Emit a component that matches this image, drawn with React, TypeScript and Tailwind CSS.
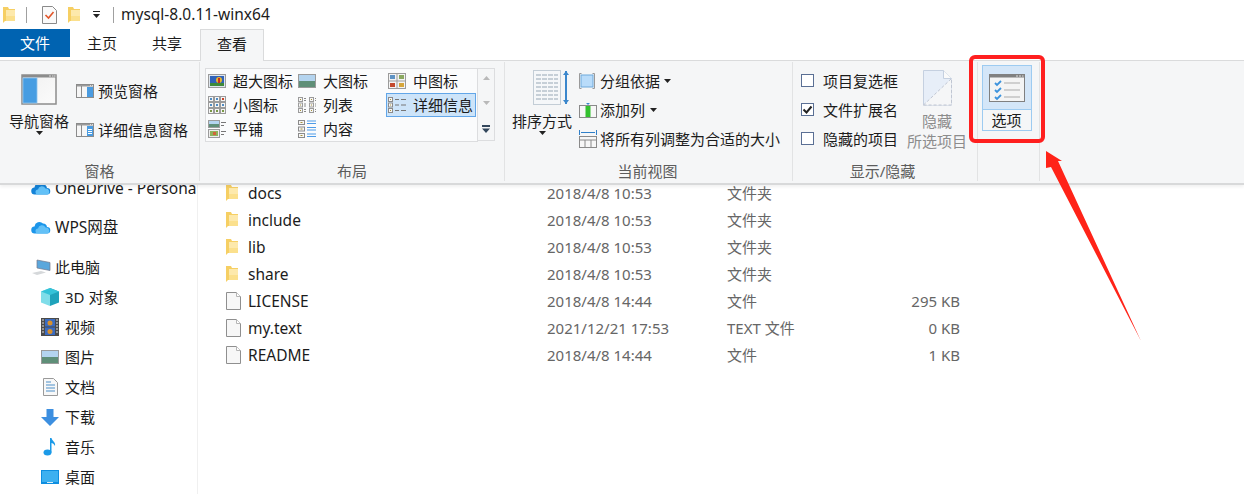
import React from "react";

const Folder = ({ className = "" }: { className?: string }) => (
  <svg className={className} viewBox="0 0 12 16" width="12" height="16">
    <path d="M0 0h5l1 2h6V14H2l-2 2z" fill="#f6cf63" />
    <path d="M3 3h9v11H3z" fill="#fde9ac" />
    <path d="M3 9h9v5H3z" fill="#fbe08d" />
  </svg>
);

const FileIcon = () => (
  <svg viewBox="0 0 15 18" width="15" height="18">
    <path d="M.5.500h10l4 4v13H.5z" fill="#f7f7f7" stroke="#8f8f8f" />
    <path d="M10.500.500v4h4" fill="#fff" stroke="#b5b5b5" />
  </svg>
);

const Caret = ({ className = "" }: { className?: string }) => (
  <svg className={className} viewBox="0 0 7 4" width="7" height="4">
    <path d="M0 0h7L3.500 4z" fill="#222" />
  </svg>
);

const Pane = ({ details }: { details?: boolean }) => (
  <svg viewBox="0 0 18 14" width="18" height="14">
    <rect x=".5" y=".5" width="17" height="13" fill="#f6f6f6" stroke="#8b8b8b" />
    <rect x="1" y="1" width="16" height="1.500" fill="#9a9a9a" />
    <rect x="5" y="2" width="1" height="11" fill="#8b8b8b" />
    <rect x="11" y="3" width="6" height="10" fill="#4a9be0" />
    <rect x="14" y="1" width="1" height="1" fill="#ddd" />
    <rect x="16" y="1" width="1" height="1" fill="#ddd" />
    {details && <path d="M12 6.500h4M12 8.500h4M12 10.500h4" stroke="#fff" strokeWidth="1" />}
  </svg>
);

const Landscape = ({ x = 0, y = 0, w = 18, h = 12 }: { x?: number; y?: number; w?: number; h?: number }) => (
  <g>
    <rect x={x + 0.5} y={y + 0.5} width={w - 1} height={h - 1} fill="#eaf1f8" stroke="#9b9b9b" />
    <rect x={x + 1} y={y + 1} width={w - 2} height={(h - 2) / 2} fill="#b4d4ef" />
    <rect x={x + 1} y={y + h / 2} width={w - 2} height={h / 2 - 1} fill="#5f8f78" />
  </g>
);

const IconXL = () => (
  <svg viewBox="0 0 18 14" width="18" height="14">
    <rect x=".5" y=".5" width="17" height="13" fill="#dfe6ee" stroke="#9b9b9b" />
    <rect x="2" y="2" width="14" height="10" fill="#2f62b8" />
    <circle cx="11" cy="6" r="3" fill="#e8b52b" />
    <rect x="10" y="4" width="2" height="5" fill="#c8321f" />
    <rect x="2" y="9" width="14" height="3" fill="#3d8a3a" />
  </svg>
);

const IconL = () => (
  <svg viewBox="0 0 18 14" width="18" height="14">
    <Landscape w={18} h={14} />
  </svg>
);

const IconM = () => (
  <svg viewBox="0 0 18 16" width="18" height="16">
    <rect x=".5" y=".5" width="17" height="15" fill="#f4f4f4" stroke="#9b9b9b" />
    <path d="M9 0v16M0 8h18" stroke="#9b9b9b" />
    <rect x="2" y="2" width="5" height="4" fill="#5f93c4" />
    <rect x="11" y="2" width="5" height="4" fill="#8aa860" />
    <rect x="2" y="10" width="5" height="4" fill="#c44a2e" />
    <rect x="11" y="10" width="5" height="4" fill="#d6a63c" />
  </svg>
);

const IconS = () => (
  <svg viewBox="0 0 18 18" width="18" height="18">
    {[0, 6, 12].map((y) =>
      [0, 6, 12].map((x) => (
        <g key={`${x}-${y}`}>
          <rect x={x + 0.5} y={y + 0.5} width="5" height="5" fill="#f5f5f5" stroke="#9b9b9b" />
          <rect x={x + 2} y={y + 2} width="2" height="2" fill={x === 12 && y === 0 ? "#c8432a" : y === 12 ? "#7a9a46" : "#4f8cc4"} />
        </g>
      ))
    )}
  </svg>
);

const IconList = () => (
  <svg viewBox="0 0 18 16" width="18" height="16">
    {[0, 5.500, 11].map((y) =>
      [0, 11].map((x) => (
        <g key={`${x}-${y}`}>
          <rect x={x + 0.5} y={y + 0.5} width="4" height="4" fill="#f5f5f5" stroke="#9b9b9b" />
          <path d={`M${x + 6} ${y + 1.500}h2M${x + 6} ${y + 3.500}h2`} stroke="#8a8a8a" />
          <rect x={x + 2} y={y + 2} width="1" height="1" fill="#a6923c" />
        </g>
      ))
    )}
  </svg>
);

const IconDetail = () => (
  <svg viewBox="0 0 18 16" width="18" height="16">
    {[0, 5.500, 11].map((y) => (
      <g key={y}>
        <rect x=".5" y={y + 0.5} width="4" height="4" fill="#f5f5f5" stroke="#8b8b8b" />
        <rect x="2" y={y + 2} width="1" height="1" fill="#a6923c" />
        <path d={`M7 ${y + 2.500}h4M13 ${y + 2.500}h5`} stroke="#777" />
      </g>
    ))}
  </svg>
);

const IconTile = () => (
  <svg viewBox="0 0 18 18" width="18" height="18">
    <Landscape x={0} y={0} w={12} h={8} />
    <path d="M13 2.500h5M13 5.500h3M13 11.500h5M13 14.500h3" stroke="#777" />
    <rect x=".5" y="9.500" width="11" height="8" fill="#eee" stroke="#9b9b9b" />
    <rect x="2" y="11" width="8" height="5" fill="#8eb35c" />
    <rect x="5" y="12" width="3" height="3" fill="#d2653a" />
  </svg>
);

const IconContent = () => (
  <svg viewBox="0 0 18 18" width="18" height="18">
    {[0, 6.500, 13].map((y) => (
      <g key={y}>
        <rect x=".5" y={y + 0.5} width="6" height="4" fill="#f5f5f5" stroke="#8b8b8b" />
        <rect x="2.500" y={y + 2} width="2" height="1" fill="#a6923c" />
        <path d={`M9 ${y + 1}h9M9 ${y + 3.500}h9`} stroke="#4d9be8" />
      </g>
    ))}
  </svg>
);

const Tool = ({ icon, label, caret, gap }: { icon: React.ReactNode; label: string; caret?: boolean; gap?: string }) => (
  <div className="flex h-[29px] items-center whitespace-nowrap">
    <span className="flex w-[21px] justify-start">{icon}</span>
    <span>{label}</span>
    {caret && <Caret className={gap} />}
  </div>
);

const Group = ({ label, className, children, labelClass = "" }: { label: string; className: string; children: React.ReactNode; labelClass?: string }) => (
  <div className={`flex h-[119px] shrink-0 flex-col border-r border-[#e2e3e4] ${className}`}>
    <div className="h-[99px]">{children}</div>
    <div className={`text-center text-[15px] leading-[20px] text-[#5c5c5c] ${labelClass}`}>{label}</div>
  </div>
);

const Gallery = ({ icon, label, selected }: { icon: React.ReactNode; label: string; selected?: boolean }) => (
  <div className={`flex items-center border pl-[1px] ${selected ? "border-[#62a6e8] bg-[#cde4f9]" : "border-transparent"}`}>
    <span className="flex w-[25px] justify-start">{icon}</span>
    <span className="whitespace-nowrap">{label}</span>
  </div>
);

const Check = ({ label, on }: { label: string; on?: boolean }) => (
  <div className="flex h-[29px] items-center">
    <span className="mr-[9px] flex h-[13px] w-[13px] items-center justify-center border border-[#5a6f94] bg-white">
      {on && (
        <svg viewBox="0 0 11 11" width="11" height="11">
          <path d="M1.500 5.500l3 3 5-6" fill="none" stroke="#222" strokeWidth="2" />
        </svg>
      )}
    </span>
    <span>{label}</span>
  </div>
);

const NavRow = ({ icon, label, indent, latin }: { icon: React.ReactNode; label: string; indent?: boolean; latin?: boolean }) => (
  <div className={`flex h-[30px] items-center whitespace-nowrap ${indent ? "pl-[40px]" : "pl-[31px]"}`}>
    <span className={`flex w-[20px] justify-center ${indent ? "mr-[5px]" : "mr-[4px]"}`}>{icon}</span>
    <span className={latin ? "text-[15.5px]" : ""}>{label}</span>
  </div>
);

const Cloud = ({ color = "#1c96ea" }: { color?: string }) => (
  <svg viewBox="0 0 20 14" width="20" height="14">
    <path d="M4 13.500a3.500 3.500 0 0 1-.5-7A5 5 0 0 1 12 3.500a4 4 0 0 1 4 3.500 3.200 3.200 0 0 1 0 6.500z" fill={color} />
    <path d="M7 13.500a2.500 2.500 0 0 1 0-5 4 4 0 0 1 7.500-1 3.200 3.200 0 0 1 2 6z" fill="#63c1f7" />
  </svg>
);

const files = [
  ["docs", "2018/4/8 10:53", "文件夹", ""],
  ["include", "2018/4/8 10:53", "文件夹", ""],
  ["lib", "2018/4/8 10:53", "文件夹", ""],
  ["share", "2018/4/8 10:53", "文件夹", ""],
  ["LICENSE", "2018/4/8 14:44", "文件", "295 KB"],
  ["my.text", "2021/12/21 17:53", "TEXT 文件", "0 KB"],
  ["README", "2018/4/8 14:44", "文件", "1 KB"],
];

export default function App() {
  return (
    <div className="relative h-[494px] w-[1244px] overflow-hidden bg-white text-[15px] leading-[20px] text-[#1c1c1c] [font-family:'Noto_Sans','Noto_Sans_CJK_SC',sans-serif]">
      {/* Title bar */}
      <div className="flex h-[29px] items-center">
        <Folder className="ml-[3px]" />
        <span className="ml-[11px] h-[16px] w-px bg-[#a0a0a0]" />
        <svg className="ml-[15px]" viewBox="0 0 15 18" width="15" height="18">
          <path d="M.5.500h10l4 4v13H.5z" fill="#fafafa" stroke="#8a8a8a" />
          <path d="M3.500 9l3 3 5-6" fill="none" stroke="#e2562a" strokeWidth="1.600" />
        </svg>
        <Folder className="ml-[11px]" />
        <svg className="ml-[13px]" viewBox="0 0 7 7" width="7" height="7">
          <path d="M0 0h7v1H0zM0 3h7L3.500 7z" fill="#222" />
        </svg>
        <span className="ml-[13px] h-[16px] w-px bg-[#a0a0a0]" />
        <span className="ml-[7px] -mt-[2px] text-[15.5px]">mysql-8.0.11-winx64</span>
      </div>

      {/* Tabs */}
      <div className="flex h-[32px] border-b border-[#dadbdc]">
        <div className="flex h-[28px] w-[70px] items-center justify-center bg-[#0063b1] text-white">文件</div>
        <div className="ml-[17px] flex h-[28px] items-center">主页</div>
        <div className="ml-[35px] flex h-[28px] items-center">共享</div>
        <div className="z-10 ml-[18px] flex h-[32px] w-[64px] items-center justify-center border border-b-0 border-[#dadbdc] bg-[#f5f6f7] pb-[4px]">查看</div>
      </div>

      {/* Ribbon */}
      <div className="relative z-10 flex h-[124px] border-b-2 border-[#d8d9da] bg-[#f5f6f7] pt-[1px] shadow-[0_2px_3px_rgba(0,0,0,0.06)]">
        <Group label="窗格" className="w-[200px]">
          <div className="flex h-full">
            <div className="flex w-[78px] flex-col items-center pt-[12px]">
              <svg viewBox="0 0 36 31" width="36" height="31">
                <defs>
                  <linearGradient id="navRight" x1="0" x2="1" y1="0" y2="1">
                    <stop offset="0" stopColor="#f0f0f0" />
                    <stop offset="1" stopColor="#fbfbfb" />
                  </linearGradient>
                </defs>
                <rect x="1" y="1" width="34" height="29" fill="url(#navRight)" stroke="#8c8c8c" strokeWidth="1.500" />
                <rect x="1" y="1" width="34" height="2.500" fill="#8c8c8c" />
                <path d="M28 2h2M31 2h1.500M33 2h1.500" stroke="#ddd" />
                <rect x="2" y="4" width="14" height="25" fill="#479de2" stroke="#8cc2ee" strokeWidth=".8" />
              </svg>
              <span className="mt-[6px]">导航窗格</span>
              <Caret />
            </div>
            <div className="-ml-[2px] pt-[9px]">
              <div className="flex h-[39px] items-center">
                <span className="w-[22px]">
                  <Pane />
                </span>
                预览窗格
              </div>
              <div className="flex h-[39px] items-center">
                <span className="w-[22px]">
                  <Pane details />
                </span>
                详细信息窗格
              </div>
            </div>
          </div>
        </Group>

        <Group label="布局" className="w-[305px]">
          <div className="flex pl-[5px] pt-[6px]">
            <div className="grid h-[74px] w-[273px] grid-cols-[90px_90px_90px] grid-rows-[24px_24px_24px] border border-[#dcdddf] bg-[#fafbfc]">
              <Gallery icon={<IconXL />} label="超大图标" />
              <Gallery icon={<IconL />} label="大图标" />
              <Gallery icon={<IconM />} label="中图标" />
              <Gallery icon={<IconS />} label="小图标" />
              <Gallery icon={<IconList />} label="列表" />
              <Gallery icon={<IconDetail />} label="详细信息" selected />
              <Gallery icon={<IconTile />} label="平铺" />
              <Gallery icon={<IconContent />} label="内容" />
            </div>
            <div className="flex h-[73px] w-[17px] flex-col items-center justify-between border-y border-r border-[#dcdddf] py-[7px]">
              <svg viewBox="0 0 7 4" width="7" height="4">
                <path d="M0 4h7L3.500 0z" fill="#b9b9b9" />
              </svg>
              <svg viewBox="0 0 7 4" width="7" height="4">
                <path d="M0 0h7L3.500 4z" fill="#b9b9b9" />
              </svg>
              <svg viewBox="0 0 8 8" width="8" height="8">
                <path d="M0 0h8v2H0zM0 3.500h8L4 8z" fill="#33475c" />
              </svg>
            </div>
          </div>
        </Group>

        <Group label="当前视图" className="w-[288px]" labelClass="pr-[2px]">
          <div className="flex h-full">
            <div className="flex w-[74px] flex-col items-center pt-[8px]">
              <svg className="ml-[18px]" viewBox="0 0 37 36" width="37" height="36">
                <rect x=".5" y=".5" width="27" height="34" fill="#f5f7f9" stroke="#c3cdd6" />
                <path d="M3 5h22M3 9h22M3 13h22M3 17h22M3 21h22M3 25h22M3 29h22" stroke="#b7c2cc" strokeWidth="1.500" strokeDasharray="5 1" />
                <path d="M33 1v33" stroke="#3b87cc" strokeWidth="2" />
                <path d="M30 5l3-4 3 4zM30 30l3 4 3-4z" fill="#3b87cc" />
              </svg>
              <span className="mt-[5px]">排序方式</span>
              <Caret />
            </div>
            <div className="pt-[4px]">
              <Tool
                caret
                gap="ml-[4px]"
                label="分组依据"
                icon={
                  <svg viewBox="0 0 16 16" width="16" height="16">
                    <rect x="2" y="2" width="12" height="12" fill="#b9dcfa" stroke="#6fa9db" />
                    <path d="M2.500.500h-2v15h2M13.500.500h2v15h-2" fill="none" stroke="#9a9a9a" />
                  </svg>
                }
              />
              <Tool
                caret
                gap="ml-[5px]"
                label="添加列"
                icon={
                  <svg viewBox="0 0 18 17" width="18" height="17">
                    <path d="M9 0v2M7 2h4L9 4z" fill="#3b87cc" stroke="none" />
                    <rect x=".5" y="4.500" width="17" height="12" fill="#f7f7f7" stroke="#8a8a8a" />
                    <rect x="6.500" y="5" width="5" height="11" fill="#33c12f" />
                  </svg>
                }
              />
              <Tool
                label="将所有列调整为合适的大小"
                icon={
                  <svg viewBox="0 0 18 18" width="18" height="18">
                    <path d="M.5 0v5M17.500 0v5M2 2.500h14" stroke="#2f7fc8" />
                    <rect x=".5" y="6.500" width="17" height="11" fill="#f7f7f7" stroke="#8a8a8a" />
                    <path d="M0 10h18M6 10v8M12 10v8" stroke="#8a8a8a" />
                  </svg>
                }
              />
            </div>
          </div>
        </Group>

        <Group label="显示/隐藏" className="w-[185px]" labelClass="pr-[5px]">
          <div className="flex h-full pl-[8px] pt-[4px]">
            <div className="w-[106px] whitespace-nowrap">
              <Check label="项目复选框" />
              <Check label="文件扩展名" on />
              <Check label="隐藏的项目" />
            </div>
            <div className="flex w-[60px] flex-col items-center whitespace-nowrap pt-[4px] text-[#8c8c8c]">
              <svg viewBox="0 0 29 36" width="29" height="36">
                <path d="M.5 35V.5h20l8 8V35z" fill="#e7eef8" stroke="#c5d0e0" />
                <path d="M20.500.500v8h8" fill="#fafafa" stroke="#c5d0e0" />
                <path d="M.5 35L28.500 8.500V35z" fill="#f5f6f7" stroke="#c0c6d2" strokeDasharray="3 2" />
              </svg>
              <span className="mt-[5px]">隐藏</span>
              <span>所选项目</span>
            </div>
          </div>
        </Group>

        <Group label="" className="w-[62px]">
          <div className="pl-[4px] pt-[3px]">
            <div className="flex h-[66px] w-[50px] flex-col border border-[#9dcbf1]">
              <div className="flex h-[45px] items-center justify-center bg-[#d4e6f8]">
                <svg viewBox="0 0 36 28" width="36" height="28">
                  <rect x=".5" y=".5" width="35" height="27" fill="#f4f4f4" stroke="#808080" />
                  <rect x="1" y="1" width="34" height="2.500" fill="#808080" />
                  <path d="M27 2h2M30 2h2M33 2h1.500" stroke="#ddd" />
                  <path d="M6 9l2 2 4-4M6 16l2 2 4-4M6 23l2 2 4-4" fill="none" stroke="#3c93dd" strokeWidth="1.800" />
                  <path d="M15 9h16M15 16h16M15 23h16" stroke="#aaa" />
                </svg>
              </div>
              <div className="flex flex-1 items-center justify-center border-t border-[#9dcbf1] pr-[1px]">选项</div>
            </div>
          </div>
        </Group>
      </div>

      {/* Body */}
      <div className="flex h-[309px] overflow-hidden">
        <div className="h-full w-[198px] shrink-0 border-r border-[#f0f0f0]">
          <div className="-mt-[12px]">
            <NavRow latin label="OneDrive - Persona" icon={<Cloud color="#1483d8" />} />
            <div className="mt-[9px]">
              <NavRow latin label="WPS网盘" icon={<Cloud />} />
            </div>
            <div className="mt-[10px]">
              <NavRow
                label="此电脑"
                icon={
                  <svg viewBox="0 0 20 18" width="20" height="18">
                    <path d="M6 2l13 2.500v8L6 10z" fill="#5ba7dc" stroke="#778" strokeWidth=".7" />
                    <path d="M1 15l9-2 5 1.500-9 2.500z" fill="#d5d8da" />
                  </svg>
                }
              />
            </div>
            <NavRow
              indent
              label="3D 对象"
              icon={
                <svg viewBox="0 0 18 18" width="18" height="18">
                  <path d="M9 0l9 3.500v11L9 18z" fill="#1fa3bb" />
                  <path d="M9 0L0 3.500v11L9 18z" fill="#7fdde9" />
                  <path d="M0 3.500L9 0l9 3.500L9 7z" fill="#35c3d8" />
                </svg>
              }
            />
            <NavRow
              indent
              label="视频"
              icon={
                <svg viewBox="0 0 18 18" width="18" height="18">
                  <rect width="18" height="18" fill="#4a4a4a" />
                  <rect x="4" y="1" width="10" height="7.500" fill="#3a6bc0" />
                  <rect x="4" y="9.500" width="10" height="7.500" fill="#3a6bc0" />
                  <circle cx="9" cy="5" r="2.500" fill="#d9902c" />
                  <circle cx="9" cy="13.500" r="2.500" fill="#d9902c" />
                  <path d="M1 2h2M1 5h2M1 8h2M1 11h2M1 14h2M15 2h2M15 5h2M15 8h2M15 11h2M15 14h2" stroke="#ddd" />
                </svg>
              }
            />
            <NavRow
              indent
              label="图片"
              icon={
                <svg viewBox="0 0 18 14" width="18" height="14">
                  <Landscape w={18} h={14} />
                </svg>
              }
            />
            <NavRow
              indent
              label="文档"
              icon={
                <svg viewBox="0 0 15 18" width="15" height="18">
                  <path d="M.5.500h10l4 4v13H.5z" fill="#f8f8f8" stroke="#9a9a9a" />
                  <path d="M3 4h5M3 7h9M3 10h9M3 13h9" stroke="#4c8fc8" />
                </svg>
              }
            />
            <NavRow
              indent
              label="下载"
              icon={
                <svg viewBox="0 0 18 17" width="18" height="17">
                  <path d="M5.500 0h7v8H18l-9 9-9-9h5.500z" fill="#3d8fe0" />
                </svg>
              }
            />
            <NavRow
              indent
              label="音乐"
              icon={
                <svg viewBox="0 0 14 18" width="14" height="18">
                  <ellipse cx="4.500" cy="14.500" rx="4" ry="3" fill="#1b9ae8" />
                  <path d="M7 14.500V0h1.500c.5 3 4.500 4 3.500 8-1-2-2.500-3-3.500-3v9.500z" fill="#1b9ae8" />
                </svg>
              }
            />
            <NavRow
              indent
              label="桌面"
              icon={
                <svg viewBox="0 0 18 14" width="18" height="14">
                  <rect width="18" height="14" fill="#0d8ee0" />
                  <rect x="1" y="1" width="16" height="11" fill="#3cb0f0" />
                  <rect x="6" y="12" width="6" height="1" fill="#d8eefa" />
                </svg>
              }
            />
          </div>
        </div>

        <div className="-mt-[6px] flex-1 pl-[28px]">
          {files.map(([name, date, type, size], i) => (
            <div key={name} className="flex h-[27px] items-center">
              <span className="w-[22px]">{i < 4 ? <Folder /> : <FileIcon />}</span>
              <span className="w-[299px] text-[15.5px]">{name}</span>
              <span className="w-[180px] text-[#666]">{date}</span>
              <span className="w-[130px] text-[#666]">{type}</span>
              <span className="w-[103px] text-right text-[#666]">{size}</span>
            </div>
          ))}
        </div>
      </div>

      {/* Annotation overlay */}
      <div className="absolute left-[969px] top-[55px] z-20 h-[88px] w-[76px] rounded-[6px] border-[4px] border-[#ff1f1f]" />
      <svg className="absolute left-[1040px] top-[148px] z-20" viewBox="0 0 105 196" width="105" height="196">
        <path d="M6 3L22 13H18L101 193 11 19 6 20z" fill="#ff2318" />
      </svg>
    </div>
  );
}
